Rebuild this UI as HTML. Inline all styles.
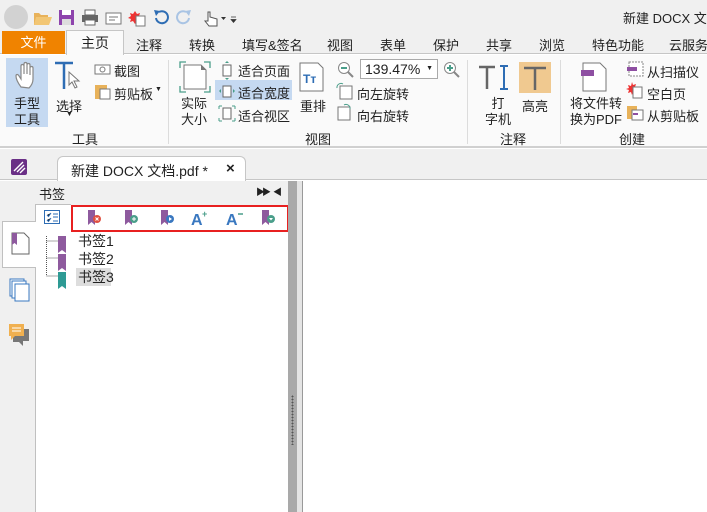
<!DOCTYPE html>
<html><head><meta charset="utf-8"><style>
*{margin:0;padding:0;box-sizing:border-box}
body{width:707px;height:512px;overflow:hidden;position:relative;background:#fff;font-family:"Liberation Sans","Noto Sans CJK SC",sans-serif;font-size:13px;color:#222}
.a{position:absolute;white-space:nowrap}
</style></head><body>
<!-- title bar -->
<div class="a" style="left:0;top:0;width:707px;height:31px;background:#f0f0f0"></div>
<div class="a" style="left:4px;top:5px;width:24px;height:24px;border-radius:50%;background:#d2d2d2"></div>
<svg class="a" style="left:32px;top:6px" width="210" height="22">
<path d="M2 7h5l2 2h7v10H2z" fill="#e8b25a"/><path d="M4 11h16l-3 8H2z" fill="#f2c674"/>
<rect x="27" y="4" width="15" height="15" fill="#8e44ad"/><rect x="30" y="4" width="9" height="5" fill="#fff"/><rect x="30" y="13" width="9" height="6" fill="#ddd"/>
<rect x="50" y="9" width="16" height="7" fill="#666"/><rect x="53" y="4" width="10" height="5" fill="#fff" stroke="#666"/><rect x="53" y="14" width="10" height="5" fill="#fff" stroke="#666"/>
<rect x="74" y="7" width="15" height="11" fill="#fff" stroke="#777"/><path d="M77 11h9M77 14h6" stroke="#777"/>
<path d="M103 5l2 3 3-1-1 3 3 2-3 1 1 3-3-1-2 3-2-3-3 1 1-3-3-1 3-2-1-3 3 1z" fill="#e33"/><rect x="104" y="10" width="9" height="10" fill="#fff" stroke="#777"/>
<path d="M124 12a6 6 0 1 0 3-6" fill="none" stroke="#2e6db4" stroke-width="2"/><path d="M122 4l6 1-4 5z" fill="#2e6db4"/>
<path d="M157 12a6 6 0 1 1-3-6" fill="none" stroke="#a9c4e4" stroke-width="2"/><path d="M159 4l-6 1 4 5z" fill="#a9c4e4"/>
<path d="M176 6v9h-3l4 5h8v-7l-7-2V6z" fill="#fff" stroke="#555"/>
<path d="M189 11h5l-2.5 3z" fill="#333"/><path d="M199 11h5M199 13.5h5l-2.5 3z" fill="#333" stroke="#333" stroke-width=".7"/>
</svg>
<div class="a" style="left:623px;top:8px;font-size:13px">新建 DOCX 文档</div>
<!-- tabs row -->
<div class="a" style="left:0;top:30px;width:707px;height:24px;background:#f0f0f0;border-bottom:1px solid #c6c6c6"></div>
<div class="a" style="left:2px;top:31px;width:63px;height:23px;background:#f08300;color:#fff;text-align:center;line-height:23px">文件</div>
<div class="a" style="left:66px;top:30px;width:58px;height:25px;background:#fafafa;border:1px solid #c6c6c6;border-bottom:none;text-align:center;line-height:24px;font-size:14px">主页</div>
<div class="a" style="top:35px;left:136px">注释</div>
<div class="a" style="top:35px;left:189px">转换</div>
<div class="a" style="top:35px;left:242px">填写&amp;签名</div>
<div class="a" style="top:35px;left:327px">视图</div>
<div class="a" style="top:35px;left:380px">表单</div>
<div class="a" style="top:35px;left:433px">保护</div>
<div class="a" style="top:35px;left:486px">共享</div>
<div class="a" style="top:35px;left:539px">浏览</div>
<div class="a" style="top:35px;left:592px">特色功能</div>
<div class="a" style="top:35px;left:669px">云服务</div>
<!-- ribbon -->
<div class="a" style="left:0;top:55px;width:707px;height:93px;background:#fafafa;border-bottom:2px solid #d0d0d0"></div>
<div class="a" style="left:6px;top:58px;width:42px;height:69px;background:#c5d9f1"></div>
<svg class="a" style="left:14px;top:61px" width="28" height="32"><path d="M7 26c-3-4-5-8-5-11 0-2 2-2 3 0l2 3V5c0-2 3-2 3 0v8V3c0-2 3-2 3 0v10V4c0-2 3-2 3 0v10V7c0-2 3-2 3 0v11c0 4-2 7-4 9z" fill="#fff" stroke="#888" stroke-width="1.2"/></svg>
<div class="a" style="left:14px;top:96px;line-height:16px;font-size:13px">手型<br>工具</div>
<svg class="a" style="left:53px;top:60px" width="28" height="34"><path d="M2 3h18M11 3v26" stroke="#2e6db4" stroke-width="2.5"/><path d="M16 12l10 9-5 0 3 6-2 1-3-6-3 3z" fill="#fff" stroke="#777"/></svg>
<div class="a" style="left:56px;top:96px">选择</div>
<div class="a" style="left:66px;top:111px;font-size:7px">▼</div>
<svg class="a" style="left:94px;top:62px" width="18" height="14"><rect x="1" y="3" width="15" height="9" fill="#fff" stroke="#777"/><circle cx="8.5" cy="7.5" r="2.5" fill="none" stroke="#777"/></svg>
<div class="a" style="left:114px;top:61px">截图</div>
<svg class="a" style="left:94px;top:82px" width="18" height="18"><rect x="1" y="3" width="12" height="14" fill="#e8b25a"/><rect x="6" y="7" width="10" height="10" fill="#fff" stroke="#777"/></svg>
<div class="a" style="left:114px;top:84px">剪贴板</div>
<div class="a" style="left:155px;top:86px;font-size:7px">▼</div>
<div class="a" style="left:72px;top:129px">工具</div>
<div class="a" style="left:168px;top:60px;width:1px;height:84px;background:#dcdcdc"></div>
<svg class="a" style="left:179px;top:61px" width="32" height="32"><path d="M1 7V1h6M25 1h6v6M31 25v6h-6M7 31H1v-6" fill="none" stroke="#4a9e8a" stroke-width="1.3"/><path d="M5 4h17l5 5v19H5z" fill="#fff" stroke="#777"/><path d="M22 4v5h5" fill="#777"/></svg>
<div class="a" style="left:181px;top:96px;line-height:16px">实际<br>大小</div>
<div class="a" style="left:215px;top:80px;width:77px;height:20px;background:#c5d9f1"></div>
<svg class="a" style="left:218px;top:61px" width="18" height="62"><rect x="5" y="4" width="8" height="11" fill="#fff" stroke="#666"/><path d="M9 0l-2 2h4zM9 19l-2-2h4z" fill="#4a9e8a"/><rect x="5" y="25" width="8" height="11" fill="#fff" stroke="#666"/><path d="M1 30l2-2v4zM17 30l-2-2v4z" fill="#4a9e8a"/><rect x="5" y="47" width="8" height="11" fill="#fff" stroke="#666"/><path d="M1 45v3M1 45h3M17 45v3M17 45h-3M1 60v-3M1 60h3M17 60v-3M17 60h-3" stroke="#4a9e8a"/></svg>
<div class="a" style="left:238px;top:61px">适合页面</div>
<div class="a" style="left:238px;top:83px">适合宽度</div>
<div class="a" style="left:238px;top:106px">适合视区</div>
<svg class="a" style="left:299px;top:62px" width="26" height="30"><path d="M1 1h18l5 5v23H1z" fill="#fff" stroke="#777"/><text x="4" y="21" font-size="12" font-weight="bold" fill="#2e6db4" font-family="Liberation Sans">Tт</text></svg>
<div class="a" style="left:300px;top:96px">重排</div>
<svg class="a" style="left:336px;top:61px" width="18" height="18"><circle cx="8" cy="7" r="5.5" fill="#fff" stroke="#888"/><path d="M5 7h6" stroke="#4a9e8a" stroke-width="2"/><path d="M12 11l5 5" stroke="#888" stroke-width="2"/></svg>
<div class="a" style="left:360px;top:59px;width:78px;height:20px;border:1px solid #aaa;background:#fff;padding-left:4px;line-height:18px;font-size:14px">139.47%<span style="position:absolute;right:4px;font-size:7px">▼</span></div>
<svg class="a" style="left:442px;top:61px" width="18" height="18"><circle cx="8" cy="7" r="5.5" fill="#fff" stroke="#888"/><path d="M5 7h6M8 4v6" stroke="#4a9e8a" stroke-width="2"/><path d="M12 11l5 5" stroke="#888" stroke-width="2"/></svg>
<svg class="a" style="left:336px;top:82px" width="18" height="40"><rect x="4" y="4" width="12" height="13" fill="#fff" stroke="#777"/><path d="M1 6a4 4 0 0 1 6-4" fill="none" stroke="#4a9e8a"/><rect x="2" y="25" width="12" height="13" fill="#fff" stroke="#777"/><path d="M8 23a4 4 0 0 1 6 4" fill="none" stroke="#4a9e8a"/></svg>
<div class="a" style="left:357px;top:84px">向左旋转</div>
<div class="a" style="left:357px;top:106px">向右旋转</div>
<div class="a" style="left:305px;top:129px">视图</div>
<div class="a" style="left:467px;top:60px;width:1px;height:84px;background:#dcdcdc"></div>
<svg class="a" style="left:478px;top:65px" width="32" height="26"><path d="M1 2h16M9 2v22" stroke="#666" stroke-width="2.5"/><path d="M22 1h8M26 1v23M22 24h8" stroke="#2e6db4" stroke-width="2"/></svg>
<div class="a" style="left:485px;top:96px;line-height:16px;text-align:center">打<br>字机</div>
<div class="a" style="left:519px;top:62px;width:32px;height:31px;background:#f0c990"></div>
<svg class="a" style="left:523px;top:66px" width="24" height="26"><path d="M1 2h22M12 2v22" stroke="#666" stroke-width="2.5"/></svg>
<div class="a" style="left:522px;top:96px">高亮</div>
<div class="a" style="left:500px;top:129px">注释</div>
<div class="a" style="left:560px;top:60px;width:1px;height:84px;background:#dcdcdc"></div>
<svg class="a" style="left:580px;top:62px" width="28" height="30"><path d="M3 1h17l6 6v22H3z" fill="#fff" stroke="#777"/><rect x="1" y="8" width="13" height="6" fill="#8e4fa2"/></svg>
<div class="a" style="left:570px;top:96px;line-height:16px">将文件转<br>换为PDF</div>
<svg class="a" style="left:626px;top:60px" width="20" height="62"><rect x="3" y="2" width="14" height="14" fill="#fff" stroke="#888" stroke-dasharray="2 1"/><rect x="1" y="7" width="10" height="4" fill="#8e4fa2"/><path d="M6 22l1 3 3-1-1 3 3 1-3 2 1 3-3-1-1 3-1-3-3 1 1-3-3-1 3-1-1-3 3 1z" fill="#e33"/><rect x="7" y="27" width="9" height="11" fill="#fff" stroke="#777"/><rect x="1" y="46" width="10" height="13" fill="#e8b25a"/><rect x="6" y="50" width="11" height="10" fill="#fff" stroke="#777"/><rect x="7" y="53" width="5" height="2" fill="#8e4fa2"/></svg>
<div class="a" style="left:647px;top:62px">从扫描仪</div>
<div class="a" style="left:647px;top:84px">空白页</div>
<div class="a" style="left:647px;top:106px">从剪贴板</div>
<div class="a" style="left:619px;top:129px">创建</div>
<!-- doc tab row -->
<div class="a" style="left:0;top:149px;width:707px;height:31px;background:#f0f0f0;border-bottom:1px solid #c6c6c6"></div>
<svg class="a" style="left:10px;top:158px" width="18" height="18"><rect x="1" y="1" width="16" height="16" rx="2" fill="#6a2f86"/><path d="M4 13l9-9M7 14l7-7M10 15l5-5" stroke="#fff" stroke-width="1.4"/></svg>
<div class="a" style="left:57px;top:156px;width:189px;height:25px;background:#fff;border:1px solid #c6c6c6;border-bottom:none;border-radius:6px 6px 0 0"></div>
<div class="a" style="left:71px;top:161px;font-size:14px">新建 DOCX 文档.pdf *</div>
<div class="a" style="left:226px;top:160px;font-size:15px;font-weight:bold">×</div>
<!-- left strip & panel -->
<div class="a" style="left:0;top:181px;width:288px;height:331px;background:#f0f0f0"></div>
<div class="a" style="left:39px;top:184px">书签</div>
<div class="a" style="left:256px;top:185px;font-size:9px;letter-spacing:-3px">▶▶</div>
<div class="a" style="left:273px;top:185px;font-size:9px">◀</div>
<div class="a" style="left:35px;top:205px;width:253px;height:307px;background:#fff;border-left:1px solid #c0c0c0"></div>
<div class="a" style="left:35px;top:204px;width:36px;height:28px;background:#fff;border-left:1px solid #c0c0c0;border-top:1px solid #c0c0c0"></div>
<svg class="a" style="left:44px;top:210px" width="16" height="14"><rect x=".5" y=".5" width="15" height="13" fill="#fff" stroke="#2e6db4"/><path d="M3 5l1.5 1.5L7 3M3 10l1.5 1.5L7 8M9 4h5M9 7h5M9 11h5" stroke="#2e6db4"/></svg>
<div class="a" style="left:71px;top:205px;width:218px;height:27px;border:2px solid #e82020"></div>
<svg class="a" style="left:85px;top:208px" width="200" height="20">
<g><path d="M3 2h7v15l-3.5-3L3 17z" fill="#8e5a9e"/><circle cx="12" cy="11" r="4" fill="#e05040"/><path d="M10.5 9.5l3 3M13.5 9.5l-3 3" stroke="#fff" stroke-width="1"/></g>
<g transform="translate(37 0)"><path d="M3 2h7v15l-3.5-3L3 17z" fill="#8e5a9e"/><circle cx="12" cy="11" r="4" fill="#4a9e8a"/><path d="M10 11h4M12 9v4" stroke="#fff"/></g>
<g transform="translate(73 0)"><path d="M3 2h7v15l-3.5-3L3 17z" fill="#8e5a9e"/><circle cx="12" cy="11" r="4" fill="#3a78c0"/><path d="M11 9l3 2-3 2z" fill="#fff"/></g>
<text x="106" y="17" font-size="16" font-weight="bold" fill="#3a78c0" font-family="Liberation Sans">A</text><text x="117" y="9" font-size="9" font-weight="bold" fill="#4a9e8a" font-family="Liberation Sans">+</text>
<text x="141" y="17" font-size="16" font-weight="bold" fill="#3a78c0" font-family="Liberation Sans">A</text><path d="M153 6h5" stroke="#4a9e8a" stroke-width="1.5"/>
<g transform="translate(174 0)"><path d="M3 2h7v15l-3.5-3L3 17z" fill="#8e5a9e"/><circle cx="12" cy="11" r="4" fill="#4a9e8a"/><path d="M10 10h4l-2 2.5z" fill="#fff"/></g>
</svg>
<!-- tree -->
<svg class="a" style="left:44px;top:236px" width="30" height="56"><path d="M2.5 0v40M2.5 5h12M2.5 22h12M2.5 40h12" stroke="#555" stroke-dasharray="1 1"/><path d="M14 0h8v17l-4-3-4 3z" fill="#8e5a9e"/><path d="M14 18h8v17l-4-3-4 3z" fill="#8e5a9e"/><path d="M14 36h8v17l-4-3-4 3z" fill="#2e9a94"/></svg>
<div class="a" style="left:78px;top:232px;font-size:14px;line-height:18px">书签1</div>
<div class="a" style="left:78px;top:250px;font-size:14px;line-height:18px">书签2</div>
<div class="a" style="left:76px;top:268px;width:35px;height:18px;background:#ddd"></div>
<div class="a" style="left:78px;top:268px;font-size:14px;line-height:18px">书签3</div>
<!-- left tabs -->
<div class="a" style="left:2px;top:221px;width:34px;height:47px;background:#fff;border:1px solid #c0c0c0;border-right:none"></div>
<svg class="a" style="left:10px;top:232px" width="22" height="24"><path d="M2 1h12l5 5v16H2z" fill="#fff" stroke="#666"/><path d="M2 1h5v12l-2.5-2L2 13z" fill="#8e5a9e"/></svg>
<svg class="a" style="left:9px;top:278px" width="22" height="24"><rect x="1" y="1" width="14" height="17" fill="#fff" stroke="#3a78c0"/><rect x="3" y="3" width="14" height="17" fill="#fff" stroke="#3a78c0"/><rect x="6" y="6" width="14" height="17" fill="#fff" stroke="#3a78c0"/></svg>
<svg class="a" style="left:8px;top:323px" width="24" height="24"><path d="M5 6h16v12h-6v5l-4-4H5z" fill="#777"/><path d="M1 1h15v12H7l-4 4v-4H1z" fill="#f0b050"/><path d="M4 5h9M4 8h9" stroke="#fff"/></svg>
<!-- scrollbar -->
<div class="a" style="left:288px;top:181px;width:9px;height:331px;background:#a9a9a9"></div>
<div class="a" style="left:297px;top:181px;width:6px;height:331px;background:#e4e4e4;border-right:1px solid #999"></div>
<div class="a" style="left:291px;top:395px;width:3px;height:50px;background-image:radial-gradient(#555 0.8px,transparent 1px);background-size:3px 3px"></div>
</body></html>
